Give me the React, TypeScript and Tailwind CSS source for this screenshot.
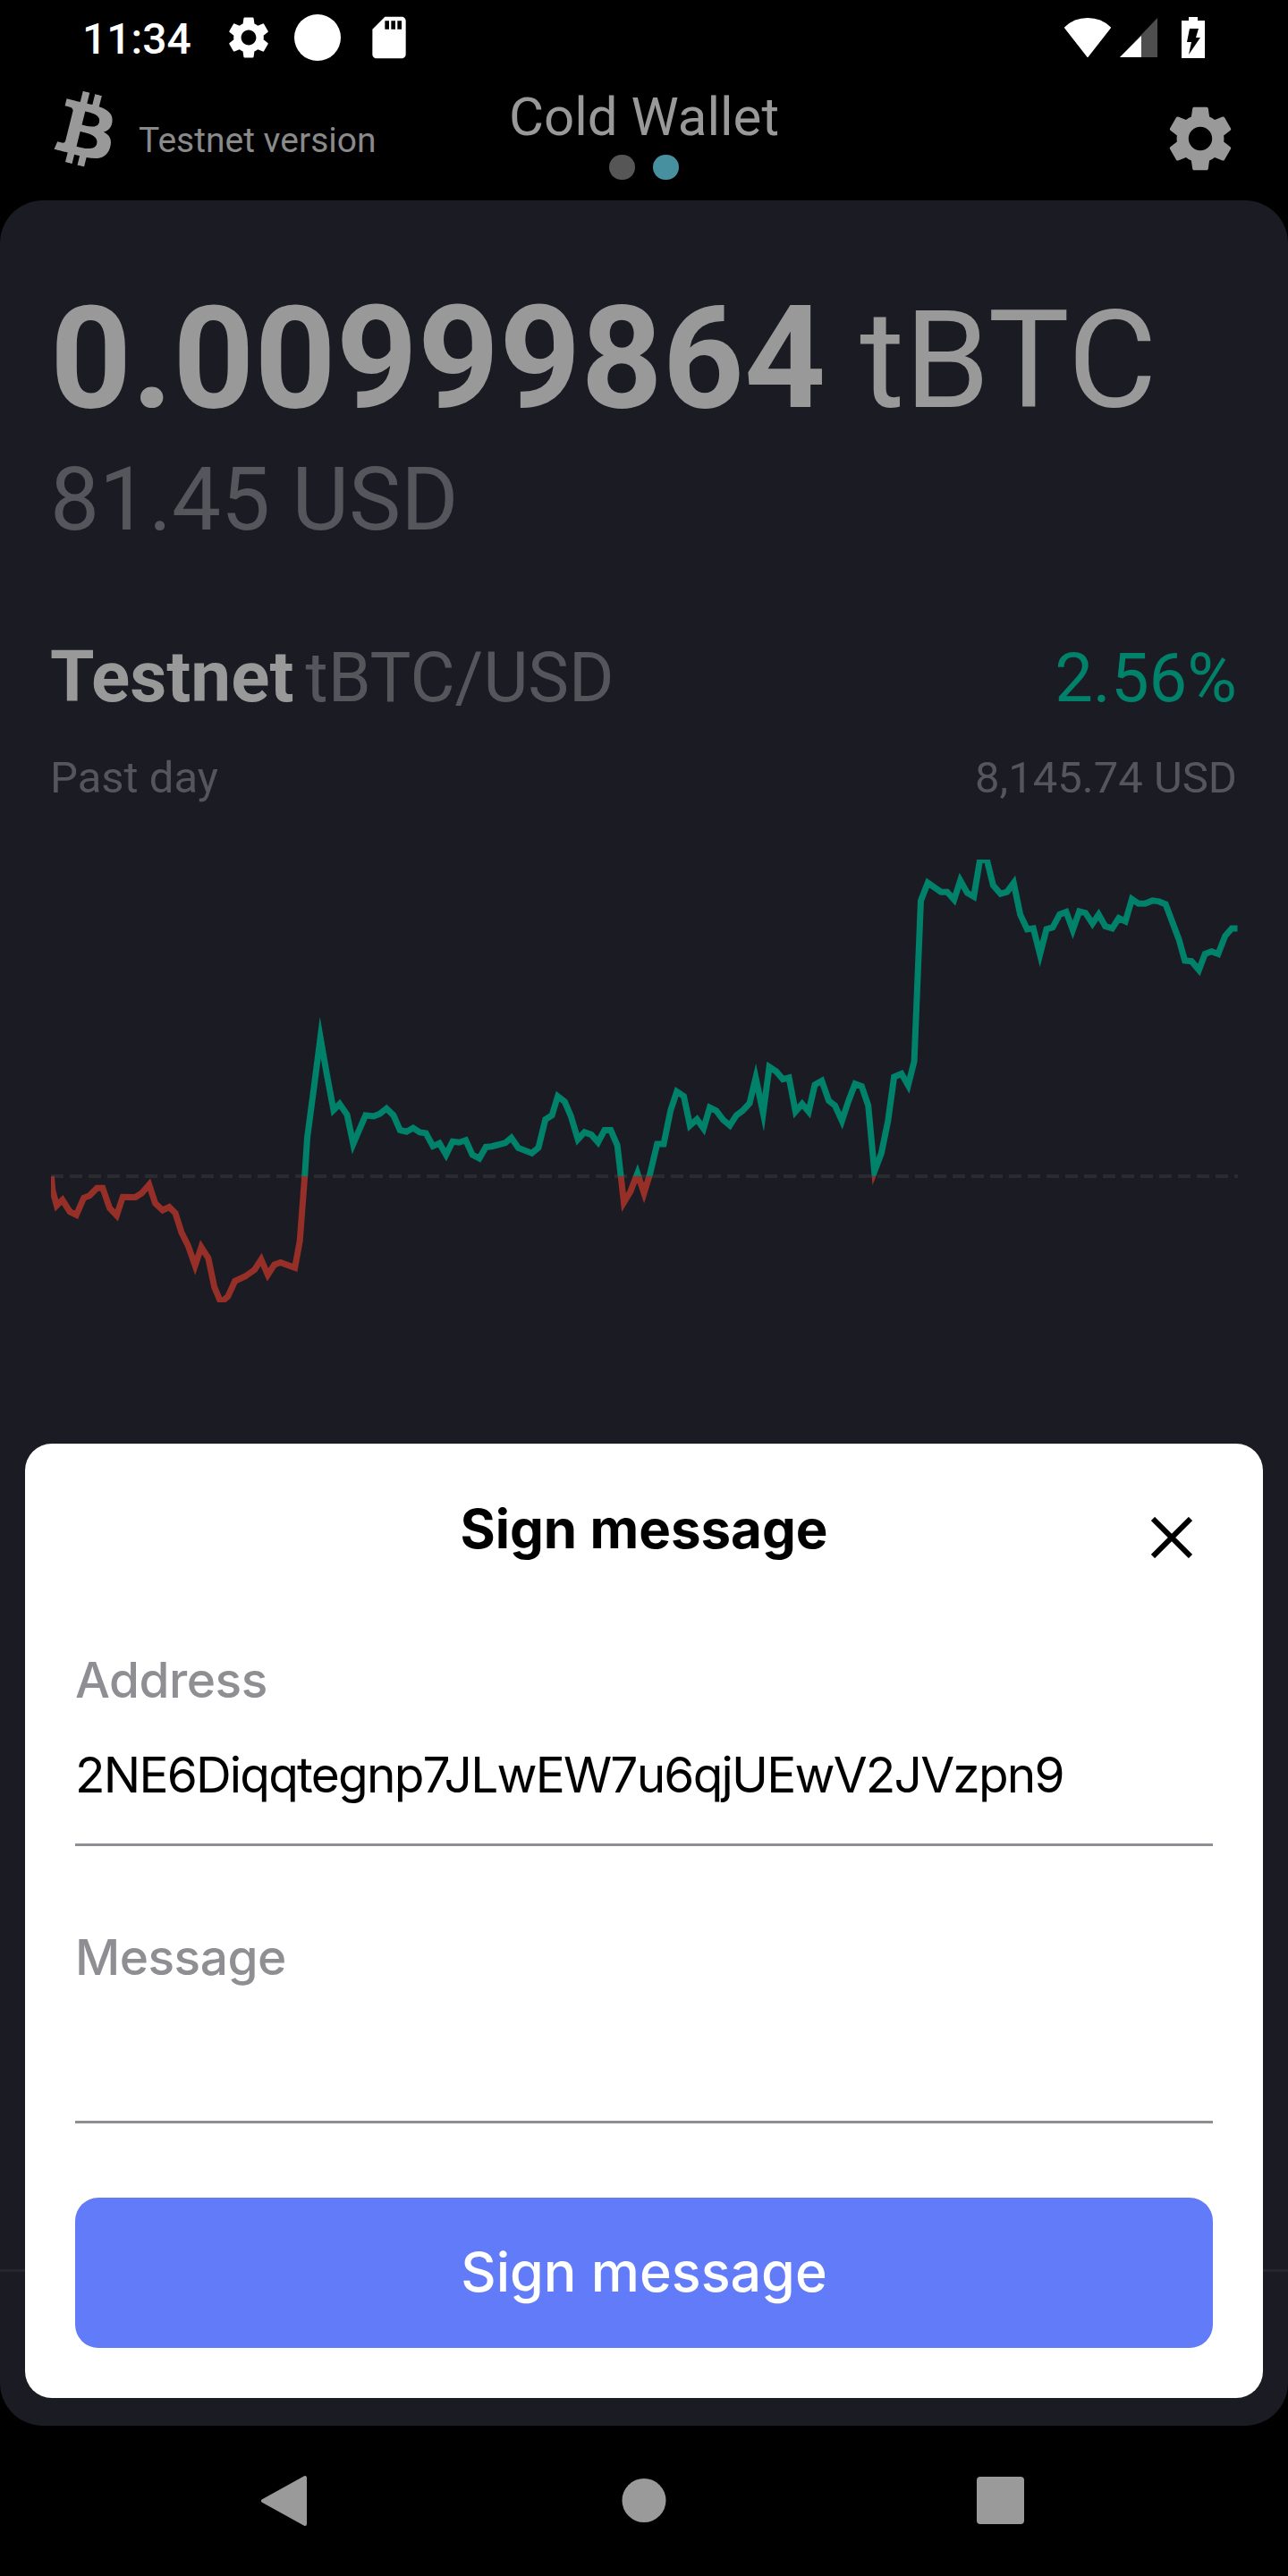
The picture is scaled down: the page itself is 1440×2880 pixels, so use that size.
import { MdSettings, MdSdCard } from "react-icons/md";
import { FaBtc } from "react-icons/fa";

const a: number[][] = [[125,1095],[128,1140],[138,1190],[152,1172],[170,1210],[186,1220],[204,1165],[218,1158],[236,1133],[250,1133],[267,1198],[284,1222],[299,1162],[330,1163],[345,1150],[363,1122],[378,1183],[396,1205],[412,1195],[427,1215],[442,1278],[458,1320],[475,1385],[490,1325],[507,1360],[522,1455],[538,1505],[555,1485],[572,1435],[597,1420],[620,1398],[636,1365],[652,1415],[668,1382],[683,1375],[718,1392],[730,1305],[742,1095],[748,970],[765,800],[780,645],[795,760],[812,880],[827,860],[845,895],[860,990],[890,897],[910,900],[925,892],[941,875],[958,897],[974,945],[990,950],[1006,938],[1022,952],[1037,955],[1054,997],[1070,988],[1086,1025],[1102,982],[1118,985],[1134,978],[1150,1025],[1167,1037],[1183,1000],[1197,998],[1230,987],[1245,970],[1262,1003],[1295,1020],[1311,1002],[1328,910],[1344,897],[1358,835],[1375,853],[1390,900],[1407,975],[1423,952],[1440,960],[1456,985],[1472,945],[1487,945],[1503,995],[1519,1180],[1535,1145],[1552,1085]];
const b: number[][] = [[0,1150],[15,1085],[32,990],[48,990],[65,880],[80,820],[97,835],[112,930],[129,910],[145,940],[160,872],[176,882],[193,912],[209,930],[225,897],[240,882],[257,858],[272,775],[290,890],[305,740],[322,755],[338,780],[353,775],[369,885],[385,860],[401,885],[416,798],[433,785],[450,850],[465,865],[482,915],[498,850],[514,795],[530,803],[546,865],[561,1080],[578,1020],[594,915],[609,772],[627,762],[643,800],[658,722],[674,200],[691,142],[723,172],[738,172],[755,197],[770,135],[787,175],[803,187],[818,68],[835,68],[850,150],[868,178],[884,172],[900,143],[916,245],[933,293],[948,290],[964,375],[980,293],[995,287],[1012,245],[1028,237],[1044,295],[1060,235],[1075,240],[1092,275],[1107,245],[1123,283],[1140,290],[1156,257],[1172,267],[1188,195],[1204,210],[1220,210],[1238,200],[1254,203],[1270,212],[1302,325],[1317,395],[1333,397],[1351,425],[1366,373],[1382,365],[1398,373],[1415,315],[1431,290],[1445,290]];
const sx = 720 / 1568;
const sy = 540 / 1568;
const pts = [
  ...a.map(([x, y]) => [x * sx, y * sy]),
  ...b.map(([x, y]) => [720 + x * sx, y * sy]),
]
  .map(([x, y]) => `${x.toFixed(1)},${y.toFixed(1)}`)
  .join(" ");

function Chart() {
  return (
    <svg width="1440" height="540" viewBox="0 0 1440 540" className="block mt-[40px]">
      <defs>
        <clipPath id="up"><rect x="57" y="23" width="1327" height="354" /></clipPath>
        <clipPath id="down"><rect x="57" y="377" width="1327" height="141" /></clipPath>
      </defs>
      <line x1="57" y1="377" x2="1384" y2="377" stroke="#2a2b30" strokeWidth="4" strokeDasharray="14 7" />
      <polyline points={pts} fill="none" stroke="#00816a" strokeWidth="7" strokeLinejoin="miter" strokeMiterlimit={10} clipPath="url(#up)" />
      <polyline points={pts} fill="none" stroke="#952f27" strokeWidth="7" strokeLinejoin="miter" strokeMiterlimit={10} clipPath="url(#down)" />
    </svg>
  );
}

const Field = ({ label, value }: { label: string; value: string }) => (
  <div className="h-[219px] border-b-[3px] border-[#8e8e93] [font-family:Inter,sans-serif]">
    <div className="text-[#8e8e93] text-[55px] font-medium tracking-[-0.5px] leading-[66px]">{label}</div>
    <div className="mt-[40px] text-black text-[55px] tracking-[-1.8px] leading-[66px] h-[66px]">{value}</div>
  </div>
);

export default function App() {
  return (
    <div className="relative w-[1440px] h-[2880px] bg-black overflow-hidden [font-family:Roboto,sans-serif]">
      {/* status bar */}
      <div className="h-[88px] flex items-center pl-[92px] pr-[93px] pb-[4px] text-white">
        <span className="text-[48px] font-medium leading-none w-[165px] mt-[4px]">11:34</span>
        <MdSettings className="w-[56px] h-[56px] -ml-[7px] text-white" />
        <div className="w-[52px] h-[52px] rounded-full bg-white ml-[23px]" />
        <MdSdCard className="w-[56px] h-[56px] ml-[26px] text-white" />
        <div className="flex-1" />
        <svg width="54" height="44" viewBox="0 0 54 44"><path d="M27 43 2 11C9 4 17 1 27 1s18 3 25 10Z" fill="#fff" stroke="#fff" strokeLinejoin="round" strokeWidth="2" /></svg>
        <svg width="42" height="44" viewBox="0 0 42 44" className="ml-[9px]">
          <path d="M42 0v44H0Z" fill="#4e4e4e" />
          <path d="M24 20v24H0Z" fill="#fff" />
        </svg>
        <svg width="26" height="46" viewBox="0 0 26 46" className="ml-[27px]">
          <path d="M8 0h10v4h8v42H0V4h8Z" fill="#fff" />
          <path d="M9 13h10l-3 10h5L8 42l3-14H6Z" fill="#000" />
        </svg>
      </div>

      {/* header */}
      <div className="relative h-[136px] flex items-start">
        <FaBtc className="ml-[66px] mt-[16px] w-[62px] h-[82px] rotate-[14deg] text-[#999999]" />
        <span className="ml-[27px] mt-[45px] text-[39px] leading-[48px] text-[#8a8a8a]">Testnet version</span>
        <div className="absolute left-0 right-0 top-[8px] flex flex-col items-center">
          <span className="text-[60px] leading-[70px] text-[#999999]">Cold Wallet</span>
          <div className="flex gap-[20px] mt-[7px]">
            <span className="w-[29px] h-[28px] rounded-full bg-[#565656]" />
            <span className="w-[29px] h-[28px] rounded-full bg-[#46909f]" />
          </div>
        </div>
        <MdSettings className="absolute left-[1298px] top-[23px] w-[88px] h-[88px] text-[#999999]" />
      </div>

      {/* panel */}
      <div className="relative h-[2488px] rounded-[48px] bg-[#1a1b23]">
        <div className="px-[56px] pt-[97px]">
          <div className="flex items-baseline whitespace-nowrap">
            <span className="text-[159px] font-bold text-[#999999] leading-[160px]">0.00999864</span>
            <span className="ml-[38px] text-[153px] text-[#999999] leading-[160px]">tBTC</span>
          </div>
          <div className="text-[98px] leading-[112px] text-[#55565b] mt-[20px]">81.45 USD</div>
          <div className="mt-[100px] flex items-baseline justify-between pr-[1px]">
            <div className="leading-[84px]">
              <span className="text-[80px] font-bold text-[#999999]">Testnet</span>
              <span className="ml-[13px] text-[77px] text-[#55565b]">tBTC/USD</span>
            </div>
            <span className="text-[76px] leading-[84px] text-[#00816a]">2.56%</span>
          </div>
          <div className="mt-[21px] flex justify-between pr-[1px] text-[49px] leading-[56px] text-[#55565b]">
            <span>Past day</span>
            <span>8,145.74 USD</span>
          </div>
        </div>
        <Chart />
      </div>

      {/* hairline in the panel, behind the modal */}
      <div className="absolute left-0 right-0 top-[2537px] h-[3px] bg-[#26272e]" />

      {/* nav bar */}
      <div className="h-[168px] flex items-center justify-center">
        <svg width="1440" height="60" viewBox="0 0 1440 60">
          <path d="M341 4v52L294 30Z" fill="#9a9a9a" stroke="#9a9a9a" strokeWidth="4" strokeLinejoin="round" />
          <circle cx="720" cy="29.5" r="24.5" fill="#9a9a9a" />
          <rect x="1092" y="3" width="53" height="53" rx="4" fill="#9a9a9a" />
        </svg>
      </div>

      {/* modal */}
      <div className="absolute left-[28px] top-[1614px] w-[1384px] h-[1067px] rounded-[30px] bg-white px-[56px] [font-family:Inter,sans-serif]">
        <div className="relative h-[194px] pt-[59px] text-center text-[60px] leading-[72px] font-bold text-black">
          Sign message
          <svg width="46" height="46" viewBox="0 0 46 46" className="absolute right-[23px] top-[82px]">
            <path d="M2 2 44 44M44 2 2 44" stroke="#000" strokeWidth="6" fill="none" />
          </svg>
        </div>
        <div className="mt-[37px] flex flex-col gap-[91px]">
          <Field label="Address" value="2NE6Diqqtegnp7JLwEW7u6qjUEwV2JVzpn9" />
          <Field label="Message" value="" />
        </div>
        <button className="mt-[83px] w-full h-[168px] rounded-[26px] bg-[#627bf9] text-white text-[61px] font-medium">Sign message</button>
      </div>
    </div>
  );
}
